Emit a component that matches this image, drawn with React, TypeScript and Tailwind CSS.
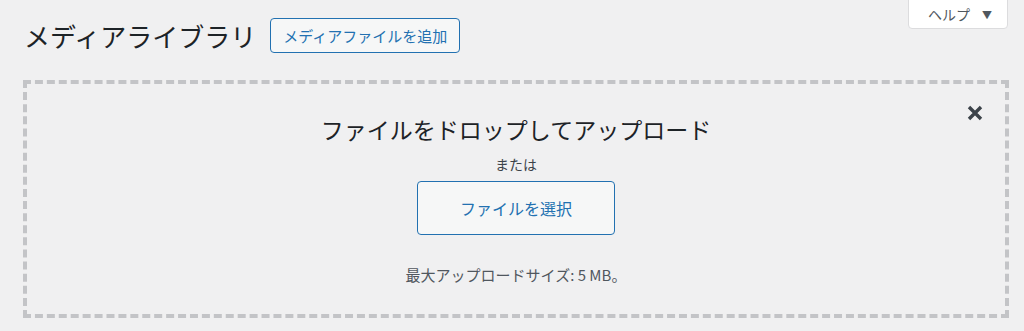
import React from "react";

const jp = "font-['Noto_Sans_CJK_JP','Noto_Sans',sans-serif]";

function CloseIcon() {
  return (
    <svg width="18" height="18" viewBox="0 0 18 18" aria-hidden="true">
      <path
        d="M3 3 L15 15 M15 3 L3 15"
        stroke="#3c434a"
        strokeWidth="3.4"
        strokeLinecap="butt"
        fill="none"
      />
    </svg>
  );
}

export default function App() {
  return (
    <div className={`relative min-h-[331px] w-full bg-[#f0f0f1] pl-[23px] pr-[15px] ${jp}`}>
      {/* screen-meta help tab */}
      <button className="absolute right-[16px] top-[-1px] flex h-[30px] w-[100px] items-center rounded-b-[4px] border border-[#dcdcde] bg-white pl-[19px] text-[14px] text-[#50575e]">
        <span>ヘルプ</span>
        <span className="ml-[12px] text-[10px] text-[#50575e]">▼</span>
      </button>

      <div className="flex items-center gap-[14px] pt-[18px]">
        <h1 className="pl-[1px] text-[26px] font-normal leading-[35px] text-[#1d2327]">
          メディアライブラリ
        </h1>
        <button className="h-[35px] w-[190px] rounded-[4px] border border-[#2271b1] bg-[#f6f7f7] text-[15px] leading-[33px] text-[#2271b1]">
          メディアファイルを追加
        </button>
      </div>

      <div className="relative mt-[27px] flex h-[238px] flex-col items-center border-4 border-dashed border-[#c3c4c7] pt-[29px]">
        <button className="absolute right-[21px] top-[20px]" aria-label="閉じる">
          <CloseIcon />
        </button>
        <h2 className="text-[23px] font-normal leading-[32px] text-[#1d2327]">
          ファイルをドロップしてアップロード
        </h2>
        <p className="mt-[9px] text-[14px] leading-[20px] text-[#3c434a]">または</p>
        <button className="mt-[7px] h-[54px] w-[198px] rounded-[4px] border border-[#2271b1] bg-[#f6f7f7] text-[16px] text-[#2271b1]">
          ファイルを選択
        </button>
        <p className="mt-[30px] text-[15px] leading-[20px] text-[#50575e]">
          最大アップロードサイズ: 5 MB。
        </p>
      </div>
    </div>
  );
}
